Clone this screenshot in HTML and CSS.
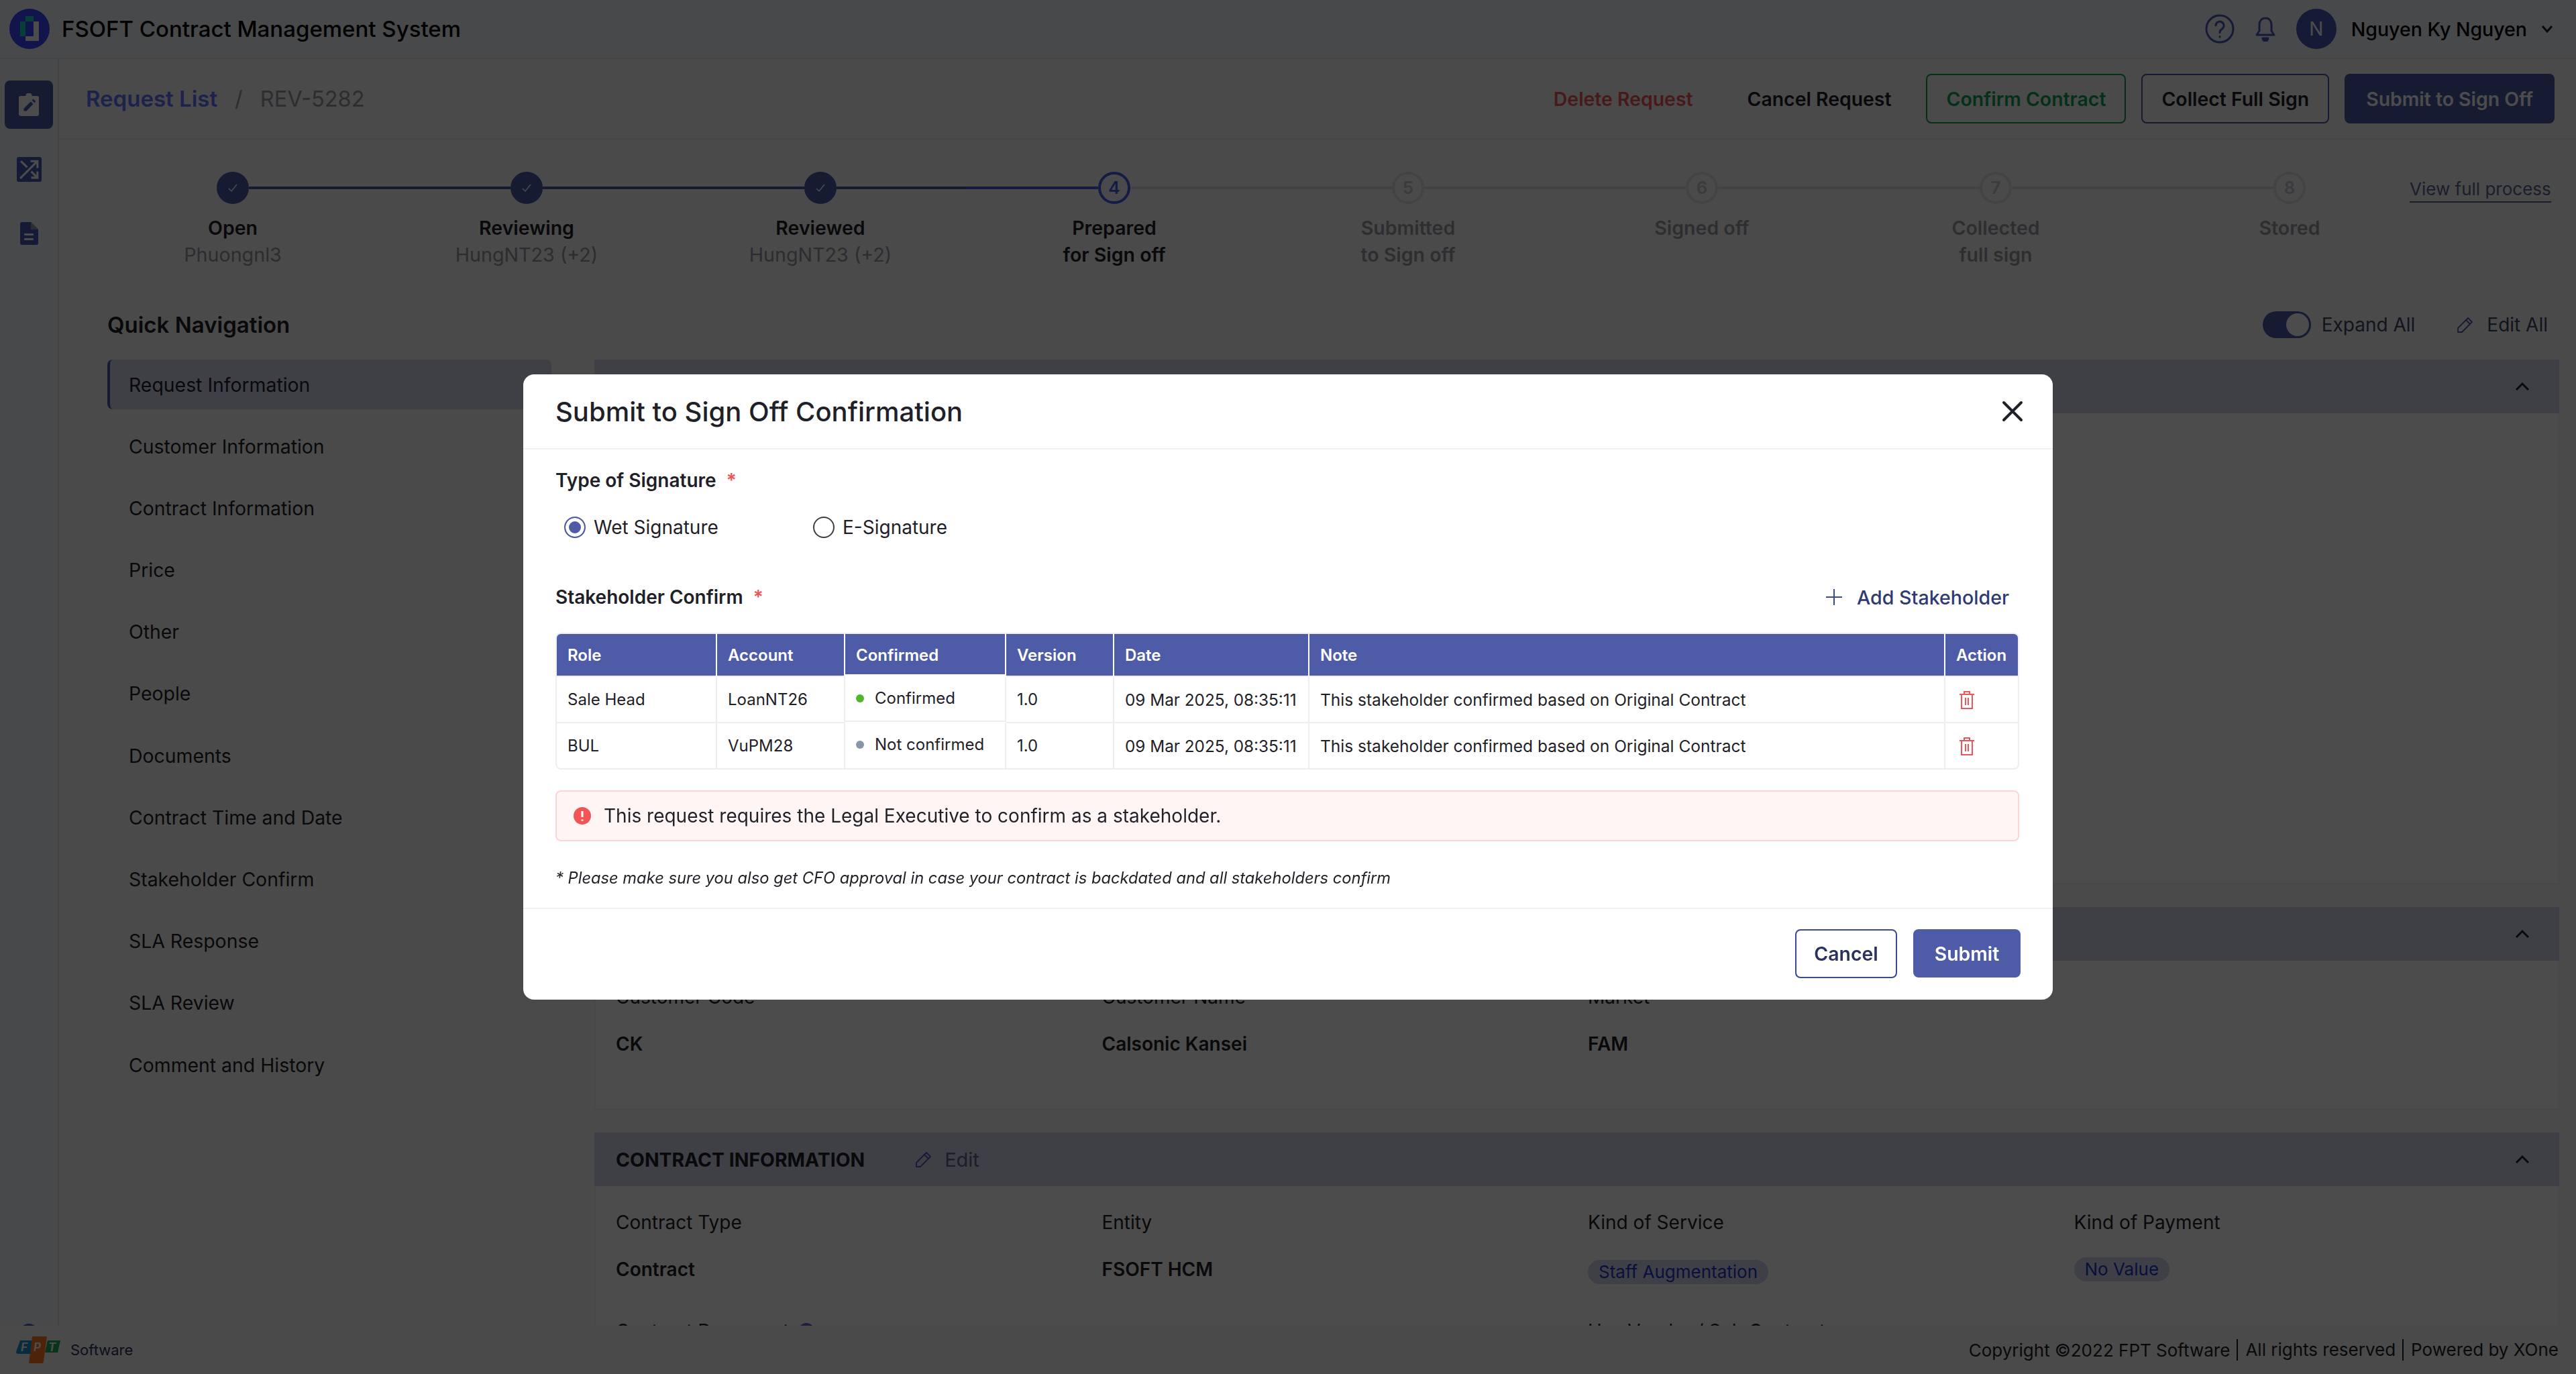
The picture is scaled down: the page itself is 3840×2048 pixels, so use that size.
FILE: index.html
```html
<!DOCTYPE html>
<html lang="en">
<head>
    <meta charset="UTF-8">
    <meta name="viewport" content="width=device-width, initial-scale=1.0">
    <title>FSOFT Contract Management System</title>
    <link rel="stylesheet" href="styles.css">
</head>
<body>
    <div class="app">
        <!-- Top bar -->
        <header class="topbar">
            <svg class="logo" viewBox="0 0 60 60">
                <circle cx="30" cy="30" r="30" fill="#3c46ff"/>
                <rect x="16" y="19" width="8" height="22" fill="#1fd0b8"/>
                <rect x="24" y="11" width="12" height="8" fill="#1fd0b8"/>
                <path d="M36 19h8v29H24v-7h12z" fill="#fff"/>
            </svg>
            <div class="app-title">FSOFT Contract Management System</div>
            <div class="topbar-right">
                <svg class="help-icon" viewBox="0 0 44 44" fill="none" stroke="#495ab4" stroke-width="3" stroke-linecap="round">
                    <circle cx="22" cy="22" r="20"/>
                    <path d="M16 17a6 6 0 1 1 9.5 5c-2.200 1.500-3.500 2.700-3.500 5.500"/>
                    <path d="M22 33.500v.5"/>
                </svg>
                <svg class="bell-icon" viewBox="0 0 30 38" fill="none" stroke="#495ab4" stroke-width="3" stroke-linejoin="round">
                    <path d="M15 3c-6 0-9 4.500-9 10v9l-4 6h26l-4-6v-9c0-5.500-3-10-9-10z"/>
                    <path d="M11 33a4 4 0 0 0 8 0z" fill="#495ab4"/>
                </svg>
                <div class="avatar">N</div>
                <div class="user-name">Nguyen Ky Nguyen</div>
                <svg class="user-chevron" viewBox="0 0 18 12" fill="none" stroke="#1f2128" stroke-width="3"><path d="M2 2l7 8 7-8"/></svg>
            </div>
        </header>

        <div class="middle">
            <!-- Side icons -->
            <aside class="sidebar">
                <div class="side-item active">
                    <svg viewBox="0 0 32 36" width="30" height="34">
                        <path d="M3 4h8a5 5 0 0 1 10 0h8a3 3 0 0 1 3 3v26a3 3 0 0 1-3 3H3a3 3 0 0 1-3-3V7a3 3 0 0 1 3-3z" fill="#fff"/>
                        <path d="M8 28v-4l11-11 4 4-11 11zM21 11l2-2 4 4-2 2z" fill="#495ab4"/>
                    </svg>
                </div>
                <div class="side-item">
                    <svg viewBox="0 0 36 36" width="37" height="37">
                        <rect width="36" height="36" rx="3" fill="#495ab4"/>
                        <path d="M5 31L29 7M20 6h10v10M6 6l9 9M21 21l9 9M30 21v9h-9" fill="none" stroke="#fff" stroke-width="3"/>
                    </svg>
                </div>
                <div class="side-item">
                    <svg viewBox="0 0 27 34" width="27" height="34">
                        <path d="M3 0h13l11 11v20a3 3 0 0 1-3 3H3a3 3 0 0 1-3-3V3a3 3 0 0 1 3-3z" fill="#495ab4"/>
                        <path d="M16 0v11h11z" fill="#9a9ca5"/>
                        <rect x="6" y="17" width="14" height="3" rx="1" fill="#fff"/>
                        <rect x="6" y="24" width="14" height="3" rx="1" fill="#fff"/>
                    </svg>
                </div>
                <div class="side-dot"></div>
            </aside>

            <main class="main">
                <div class="subheader">
                    <div class="breadcrumb">
                        <a class="crumb-link">Request List</a>
                        <span class="crumb-sep">/</span>
                        <span class="crumb-current">REV-5282</span>
                    </div>
                    <div class="actions">
                        <button class="link-btn delete">Delete Request</button>
                        <button class="link-btn">Cancel Request</button>
                        <button class="btn btn-green">Confirm Contract</button>
                        <button class="btn btn-outline">Collect Full Sign</button>
                        <button class="btn btn-primary">Submit to Sign Off</button>
                    </div>
                </div>

                <!-- Progress steps -->
                <div class="stepper">
                    <div class="step done">
                        <div class="step-head"><span class="seg blank"></span><span class="circle"><svg viewBox="0 0 16 16" width="16" height="16" fill="none" stroke="#fff" stroke-width="1.500"><path d="M2 9l4 4 8-10"/></svg></span><span class="seg fill"></span></div>
                        <div class="step-name">Open</div>
                        <div class="step-sub">Phuongnl3</div>
                    </div>
                    <div class="step done">
                        <div class="step-head"><span class="seg fill"></span><span class="circle"><svg viewBox="0 0 16 16" width="16" height="16" fill="none" stroke="#fff" stroke-width="1.500"><path d="M2 9l4 4 8-10"/></svg></span><span class="seg fill"></span></div>
                        <div class="step-name">Reviewing</div>
                        <div class="step-sub">HungNT23 (+2)</div>
                    </div>
                    <div class="step done">
                        <div class="step-head"><span class="seg fill"></span><span class="circle"><svg viewBox="0 0 16 16" width="16" height="16" fill="none" stroke="#fff" stroke-width="1.500"><path d="M2 9l4 4 8-10"/></svg></span><span class="seg fill"></span></div>
                        <div class="step-name">Reviewed</div>
                        <div class="step-sub">HungNT23 (+2)</div>
                    </div>
                    <div class="step current">
                        <div class="step-head"><span class="seg bright"></span><span class="circle">4</span><span class="seg"></span></div>
                        <div class="step-name">Prepared<br>for Sign off</div>
                    </div>
                    <div class="step">
                        <div class="step-head"><span class="seg"></span><span class="circle">5</span><span class="seg"></span></div>
                        <div class="step-name">Submitted<br>to Sign off</div>
                    </div>
                    <div class="step">
                        <div class="step-head"><span class="seg"></span><span class="circle">6</span><span class="seg"></span></div>
                        <div class="step-name">Signed off</div>
                    </div>
                    <div class="step">
                        <div class="step-head"><span class="seg"></span><span class="circle">7</span><span class="seg"></span></div>
                        <div class="step-name">Collected<br>full sign</div>
                    </div>
                    <div class="step">
                        <div class="step-head"><span class="seg"></span><span class="circle">8</span><span class="seg blank"></span></div>
                        <div class="step-name">Stored</div>
                    </div>
                    <a class="view-process">View full process</a>
                </div>

                <div class="content">
                    <!-- Quick navigation -->
                    <nav class="quick-nav">
                        <h3 class="nav-title">Quick Navigation</h3>
                        <div class="nav-list">
                            <div class="nav-item active">Request Information</div>
                            <div class="nav-item">Customer Information</div>
                            <div class="nav-item">Contract Information</div>
                            <div class="nav-item">Price</div>
                            <div class="nav-item">Other</div>
                            <div class="nav-item">People</div>
                            <div class="nav-item">Documents</div>
                            <div class="nav-item">Contract Time and Date</div>
                            <div class="nav-item">Stakeholder Confirm</div>
                            <div class="nav-item">SLA Response</div>
                            <div class="nav-item">SLA Review</div>
                            <div class="nav-item">Comment and History</div>
                        </div>
                    </nav>

                    <div class="details">
                        <div class="details-bar">
                            <span class="toggle"><span class="knob"></span></span>
                            <span class="bar-text">Expand All</span>
                            <svg class="pencil" viewBox="0 0 26 26" fill="none" stroke="#495ab4" stroke-width="1.800" stroke-linejoin="round"><path d="M2 24v-6L17 3l6 6L8 24zM14 6l6 6"/></svg>
                            <span class="bar-text">Edit All</span>
                        </div>

                        <section class="section request">
                            <div class="section-head">
                                <span class="section-title">REQUEST INFORMATION</span>
                                <svg class="chevron" viewBox="0 0 22 14" fill="none" stroke="#1f2128" stroke-width="3"><path d="M2 12l9-9 9 9"/></svg>
                            </div>
                        </section>

                        <section class="section customer">
                            <div class="section-head">
                                <span class="section-title">CUSTOMER INFORMATION</span>
                                <svg class="chevron" viewBox="0 0 22 14" fill="none" stroke="#1f2128" stroke-width="3"><path d="M2 12l9-9 9 9"/></svg>
                            </div>
                            <div class="fields">
                                <div class="field"><div class="label">Customer Code</div><div class="value">CK</div></div>
                                <div class="field"><div class="label">Customer Name</div><div class="value">Calsonic Kansei</div></div>
                                <div class="field"><div class="label">Market</div><div class="value">FAM</div></div>
                            </div>
                        </section>

                        <section class="section contract">
                            <div class="section-head">
                                <span class="section-title">CONTRACT INFORMATION</span>
                                <span class="section-edit">
                                    <svg class="pencil" viewBox="0 0 26 26" fill="none" stroke="#495ab4" stroke-width="1.800" stroke-linejoin="round"><path d="M2 24v-6L17 3l6 6L8 24zM14 6l6 6"/></svg>
                                    Edit
                                </span>
                                <svg class="chevron" viewBox="0 0 22 14" fill="none" stroke="#1f2128" stroke-width="3"><path d="M2 12l9-9 9 9"/></svg>
                            </div>
                            <div class="fields">
                                <div class="field"><div class="label">Contract Type</div><div class="value">Contract</div></div>
                                <div class="field"><div class="label">Entity</div><div class="value">FSOFT HCM</div></div>
                                <div class="field"><div class="label">Kind of Service</div><span class="pill low">Staff Augmentation</span></div>
                                <div class="field"><div class="label">Kind of Payment</div><span class="pill">No Value</span></div>
                                <div class="field"><div class="label">Contract Document <span class="info-dot"></span></div></div>
                                <div class="field"></div>
                                <div class="field"><div class="label">Has Vendor / Sub Contract</div></div>
                            </div>
                        </section>
                    </div>
                </div>
            </main>
        </div>

        <footer class="footer">
            <div class="fpt">
                <svg viewBox="0 0 66 40" width="66" height="40">
                    <path d="M6 6h20l-5 20H3a3 3 0 0 1-3-3z" fill="#1f8fd6"/>
                    <path d="M24 0h22l-5 37a3 3 0 0 1-3 3H19z" fill="#ff7a1f"/>
                    <path d="M47 6h19l-4 18H43z" fill="#1fae55"/>
                    <text x="7" y="22" class="fpt-letter">F</text>
                    <text x="26" y="22" class="fpt-letter">P</text>
                    <text x="48" y="22" class="fpt-letter">T</text>
                </svg>
                <span class="fpt-name">Software</span>
            </div>
            <div class="copyright">
                <span>Copyright ©2022 FPT Software</span>
                <span class="split">All rights reserved</span>
                <span class="split">Powered by XOne</span>
            </div>
        </footer>
    </div>

    <!-- Confirmation dialog -->
    <div class="overlay">
        <div class="modal">
            <div class="modal-head">
                <h2 class="modal-title">Submit to Sign Off Confirmation</h2>
                <svg class="close-icon" viewBox="0 0 32 32" fill="none" stroke="#1f2128" stroke-width="4" stroke-linecap="round"><path d="M3 3l26 26M29 3L3 29"/></svg>
            </div>
            <div class="modal-body">
                <div class="form-label">Type of Signature <span class="req">*</span></div>
                <div class="radios">
                    <label class="radio"><span class="radio-mark on"></span>Wet Signature</label>
                    <label class="radio"><span class="radio-mark"></span>E-Signature</label>
                </div>
                <div class="stake-head">
                    <div class="form-label">Stakeholder Confirm <span class="req">*</span></div>
                    <div class="add-stake">
                        <svg viewBox="0 0 24 24" width="24" height="24" fill="none" stroke="#3d4a8c" stroke-width="2"><path d="M12 0v24M0 12h24"/></svg>
                        Add Stakeholder
                    </div>
                </div>
                <div class="table-wrap">
                    <table class="stake-table">
                        <colgroup>
                            <col class="c-role"><col class="c-account"><col class="c-confirm"><col class="c-version"><col class="c-date"><col><col class="c-action">
                        </colgroup>
                        <thead>
                            <tr>
                                <th>Role</th>
                                <th>Account</th>
                                <th class="shifted">Confirmed</th>
                                <th>Version</th>
                                <th>Date</th>
                                <th>Note</th>
                                <th>Action</th>
                            </tr>
                        </thead>
                        <tbody>
                            <tr>
                                <td>Sale Head</td>
                                <td>LoanNT26</td>
                                <td class="shifted"><span class="dot green"></span>Confirmed</td>
                                <td>1.0</td>
                                <td class="date-cell">09 Mar 2025, 08:35:11</td>
                                <td class="note-cell">This stakeholder confirmed based on Original Contract</td>
                                <td><svg class="trash" viewBox="0 0 24 28" fill="none" stroke="#f25555" stroke-width="2"><path d="M1 6h22M4 6v21h16V6M8 6V2h8v4M10 11v11M14 11v11"/></svg></td>
                            </tr>
                            <tr>
                                <td>BUL</td>
                                <td>VuPM28</td>
                                <td class="shifted"><span class="dot grey"></span>Not confirmed</td>
                                <td>1.0</td>
                                <td class="date-cell">09 Mar 2025, 08:35:11</td>
                                <td class="note-cell">This stakeholder confirmed based on Original Contract</td>
                                <td><svg class="trash" viewBox="0 0 24 28" fill="none" stroke="#f25555" stroke-width="2"><path d="M1 6h22M4 6v21h16V6M8 6V2h8v4M10 11v11M14 11v11"/></svg></td>
                            </tr>
                        </tbody>
                    </table>
                </div>
                <div class="alert">
                    <svg viewBox="0 0 26 26" width="26" height="26"><circle cx="13" cy="13" r="13" fill="#f25555"/><path d="M13 6v9M13 18.500v2" stroke="#fff" stroke-width="3"/></svg>
                    This request requires the Legal Executive to confirm as a stakeholder.
                </div>
                <p class="note">* Please make sure you also get CFO approval in case your contract is backdated and all stakeholders confirm</p>
            </div>
            <div class="modal-foot">
                <button class="btn modal-cancel">Cancel</button>
                <button class="btn modal-submit">Submit</button>
            </div>
        </div>
    </div>
</body>
</html>
```

FILE: styles.css
```css
* {
    box-sizing: border-box;
}
body {
    margin: 0;
    font-family: Inter, "Noto Sans", sans-serif;
    font-size: 28px;
    color: #1f2128;
    background-color: #f7f8fa;
}
h2, h3, p {
    margin: 0;
}
button {
    font-family: inherit;
    font-size: 28.400px;
    font-weight: 600;
    background: none;
    border: none;
    padding: 0;
    color: inherit;
}
.app {
    height: 2048px;
    display: flex;
    flex-direction: column;
    overflow: hidden;
}

/* top bar */
.topbar {
    height: 88px;
    flex: none;
    display: flex;
    align-items: center;
    padding: 0 34px 0 14px;
    background-color: #f0f3fa;
    border-bottom: 2px solid #e1e3ea;
}
.logo {
    width: 60px;
    height: 60px;
}
.app-title {
    margin-left: 18px;
    font-size: 33px;
    font-weight: 500;
    color: #000;
}
.topbar-right {
    margin-left: auto;
    display: flex;
    align-items: center;
}
.help-icon {
    width: 44px;
    height: 44px;
}
.bell-icon {
    width: 30px;
    height: 38px;
    margin-left: 31px;
}
.avatar {
    width: 60px;
    height: 60px;
    margin-left: 31px;
    border-radius: 50%;
    background-color: #495ab4;
    color: #fff;
    display: flex;
    align-items: center;
    justify-content: center;
    font-size: 28px;
}
.user-name {
    margin-left: 22px;
    font-size: 28.500px;
    font-weight: 500;
    color: #000;
}
.user-chevron {
    width: 18px;
    height: 12px;
    margin-left: 21px;
}

/* left icons */
.middle {
    flex: 1;
    min-height: 0;
    display: flex;
}
.sidebar {
    width: 88px;
    flex: none;
    display: flex;
    flex-direction: column;
    align-items: center;
    padding-top: 32px;
    background-color: #f0f3fa;
    border-right: 2px solid #dfe1e8;
    overflow: hidden;
}
.side-item {
    width: 72px;
    height: 72px;
    margin-bottom: 24px;
    border-radius: 8px;
    display: flex;
    align-items: center;
    justify-content: center;
}
.side-item.active {
    background-color: #4e5ba6;
}
.side-dot {
    width: 28px;
    height: 28px;
    margin-top: auto;
    margin-bottom: -25px;
    border-radius: 50%;
    background-color: #495ab4;
}

.main {
    flex: 1;
    min-width: 0;
    overflow: hidden;
}
.subheader {
    height: 120px;
    display: flex;
    align-items: center;
    padding: 0 32px 0 40px;
    border-bottom: 2px solid #e1e3ea;
}
.breadcrumb {
    display: flex;
    align-items: center;
    font-size: 32.500px;
}
.crumb-link {
    font-size: 33px;
    font-weight: 600;
    color: #5f74ff;
}
.crumb-sep {
    margin: 0 26px;
    color: #94969f;
}
.crumb-current {
    color: #94969f;
}
.actions {
    margin-left: auto;
    display: flex;
    align-items: center;
}
.link-btn {
    margin-right: 52px;
}
.link-btn.delete {
    margin-right: 81px;
    color: #f25555;
}
.btn {
    height: 74px;
    padding: 0 28px;
    border-radius: 8px;
    border: 2px solid transparent;
}
.btn-green {
    color: #12a150;
    border-color: #12a150;
    margin-right: 23px;
}
.btn-outline {
    border-color: #4e5ba6;
    margin-right: 23px;
}
.btn-primary {
    padding: 0 30px;
    background-color: #4e5ba6;
    color: #fff;
}

/* stepper */
.stepper {
    display: flex;
    align-items: flex-start;
    padding: 48px 0 0 40px;
    height: 192px;
}
.step {
    width: 438px;
    flex: none;
    text-align: center;
    line-height: 40px;
}
.step-head {
    display: flex;
    align-items: center;
    margin-bottom: 16px;
}
.seg {
    flex: 1;
    height: 4px;
    background-color: #dfe0e6;
}
.seg.blank {
    background: none;
}
.seg.fill {
    background-color: #4e5ba6;
}
.seg.bright {
    background-color: #4460e8;
}
.circle {
    width: 48px;
    height: 48px;
    flex: none;
    border-radius: 50%;
    border: 4px solid #dfe0e6;
    display: flex;
    align-items: center;
    justify-content: center;
    font-size: 26px;
    font-weight: 600;
    color: #c4c5cc;
}
.step.done .circle {
    background-color: #4e5ba6;
    border-color: #4e5ba6;
}
.step.current .circle {
    border-color: #4460e8;
    color: #4460e8;
}
.step-name {
    font-size: 28.500px;
    font-weight: 600;
    color: #9a9ca5;
}
.step.done .step-name,
.step.current .step-name {
    color: #1f2128;
}
.step-sub {
    font-size: 28.700px;
    color: #94969f;
}
.view-process {
    margin: 8px 0 0 -40px;
    font-size: 26px;
    color: #5a648f;
    border-bottom: 2px solid #5a648f;
    line-height: 36px;
    white-space: nowrap;
}

/* page content */
.content {
    display: flex;
    gap: 64px;
    padding: 60px 25px 0 72px;
}
.quick-nav {
    width: 662px;
    flex: none;
}
.nav-title {
    font-size: 33px;
    font-weight: 600;
    line-height: 48px;
    margin-bottom: 28px;
}
.nav-list {
    display: flex;
    flex-direction: column;
    gap: 18.200px;
    font-size: 28.400px;
}
.nav-item {
    height: 74px;
    display: flex;
    align-items: center;
    padding-left: 32px;
    border-radius: 8px;
}
.nav-item.active {
    background-color: #d2d5e6;
    border-left: 4px solid #4e5ba6;
    padding-left: 28px;
}
.details {
    flex: 1;
    min-width: 0;
}
.details-bar {
    height: 48px;
    margin-bottom: 28px;
    padding-right: 17px;
    display: flex;
    align-items: center;
    justify-content: flex-end;
}
.toggle {
    width: 72px;
    height: 40px;
    border-radius: 20px;
    background-color: #4e5ba6;
    display: flex;
    align-items: center;
    justify-content: flex-end;
    padding-right: 3px;
    margin-right: 16px;
}
.knob {
    width: 34px;
    height: 34px;
    border-radius: 50%;
    background-color: #fff;
}
.bar-text {
    color: #3d4466;
}
.pencil {
    width: 26px;
    height: 26px;
    margin: 0 19px 0 62px;
}
.section {
    margin-bottom: 34px;
    background-color: #fff;
    border: 2px solid #f0f0f4;
    border-top: none;
}
.section.request {
    height: 782px;
}
.section.customer {
    height: 302px;
}
.section-head {
    height: 80px;
    margin: 0 -2px;
    padding: 0 32px;
    display: flex;
    align-items: center;
    background-color: #d2d5e6;
}
.section-title {
    font-size: 28.400px;
    font-weight: 700;
    color: #1f2128;
}
.section-edit {
    display: flex;
    align-items: center;
    font-size: 29px;
    color: #5a648f;
}
.section-edit .pencil {
    margin: 0 18px 0 75px;
}
.chevron {
    width: 22px;
    height: 14px;
    margin-left: auto;
    margin-right: 12px;
}
.fields {
    display: grid;
    grid-template-columns: repeat(4, 724.500px);
    padding: 34px 0 0 30px;
    row-gap: 50px;
}
.label {
    line-height: 40px;
    margin-bottom: 30px;
    display: flex;
    align-items: center;
    gap: 14px;
    white-space: nowrap;
}
.value {
    line-height: 40px;
    font-weight: 600;
}
.pill {
    display: inline-block;
    height: 36px;
    line-height: 36px;
    margin-top: 2px;
    padding: 0 16px;
    border-radius: 18px;
    background-color: #d2d8ee;
    color: #2436c8;
    font-size: 26px;
}
.pill.low {
    margin-top: 6px;
}
.info-dot {
    width: 24px;
    height: 24px;
    border-radius: 50%;
    background-color: #5a64c8;
}

/* footer */
.footer {
    height: 72px;
    flex: none;
    display: flex;
    align-items: center;
    justify-content: space-between;
    padding: 0 26px 0 24px;
    background-color: #f8f8f8;
    position: relative;
}
.fpt {
    display: flex;
    align-items: center;
}
.fpt-letter {
    font-size: 17px;
    font-weight: 700;
    font-style: italic;
    fill: #fff;
}
.fpt-name {
    margin-left: 15px;
    font-size: 22px;
    color: #2a3360;
}
.copyright {
    display: flex;
    align-items: center;
    font-size: 26px;
}
.split {
    margin-left: 10px;
    padding-left: 11px;
    border-left: 2px solid #1f2128;
    line-height: 32px;
}

/* dialog */
.overlay {
    position: fixed;
    inset: 0;
    display: flex;
    align-items: center;
    justify-content: center;
    background-color: rgba(0, 0, 0, 0.7);
}
.modal {
    width: 2280px;
    height: 932px;
    border-radius: 16px;
    background-color: #fff;
    display: flex;
    flex-direction: column;
}
.modal-head {
    height: 112px;
    flex: none;
    display: flex;
    align-items: center;
    justify-content: space-between;
    padding: 0 44px 0 48px;
    border-bottom: 2px solid #eff0f3;
}
.modal-title {
    font-size: 40px;
    font-weight: 500;
}
.close-icon {
    width: 32px;
    height: 32px;
}
.modal-body {
    flex: 1;
    padding: 26px 50px 0 48px;
    border-bottom: 2px solid #eff0f3;
}
.form-label {
    font-weight: 600;
    line-height: 40px;
}
.req {
    margin-left: 8px;
    color: #f25555;
}
.radios {
    display: flex;
    margin: 30px 0 0 13px;
    height: 40px;
}
.radio {
    display: flex;
    align-items: center;
    width: 371px;
}
.radio-mark {
    width: 32px;
    height: 32px;
    margin-right: 12px;
    border-radius: 50%;
    border: 2px solid #3d3f46;
    background-color: #fff;
}
.radio-mark.on {
    border-color: #4e5ba6;
    background-color: #4e5ba6;
    box-shadow: inset 0 0 0 5px #fff;
}
.stake-head {
    margin-top: 64px;
    display: flex;
    align-items: center;
    justify-content: space-between;
    padding-right: 15px;
}
.add-stake {
    display: flex;
    align-items: center;
    gap: 22px;
    font-size: 28.600px;
    font-weight: 500;
    color: #2f3a74;
}
.table-wrap {
    margin-top: 33px;
    border: 2px solid #eceef3;
    border-radius: 8px;
    overflow: hidden;
}
.stake-table {
    width: 100%;
    table-layout: fixed;
    border-collapse: separate;
    border-spacing: 0;
    font-size: 24px;
}
.c-role { width: 239px; }
.c-account { width: 191px; }
.c-confirm { width: 240px; }
.c-version { width: 161px; }
.c-date { width: 291px; }
.c-action { width: 108px; }
.stake-table th {
    height: 64px;
    padding: 0 0 0 16px;
    text-align: left;
    font-weight: 600;
    color: #fff;
    background-color: #4e5ba6;
    border-right: 2px solid #fff;
    border-bottom: 2px solid #eceef3;
}
.stake-table td {
    height: 69px;
    padding: 0 0 0 16px;
    border-right: 2px solid #eceef3;
    border-bottom: 2px solid #eceef3;
}
.stake-table tr:last-child td {
    height: 67px;
    border-bottom: none;
}
.stake-table th:last-child,
.stake-table td:last-child {
    border-right: none;
}
.stake-table td.date-cell {
    font-size: 24.300px;
}
.stake-table td.note-cell {
    font-size: 24.500px;
}
.stake-table td.shifted {
    padding-bottom: 4px;
}
.stake-table tr:first-child td.shifted {
    border-bottom-color: #fff;
    box-shadow: inset 0 -2px 0 #eceef3;
}
.stake-table th.shifted {
    border-bottom-color: #fff;
    box-shadow: inset 0 -2px 0 #fff;
}
.dot {
    display: inline-block;
    width: 12px;
    height: 12px;
    margin-right: 16px;
    border-radius: 50%;
    vertical-align: 2px;
}
.dot.green {
    background-color: #52b52a;
}
.dot.grey {
    background-color: #8a96a8;
}
.trash {
    display: block;
    width: 24px;
    height: 28px;
    margin-left: 4px;
}
.alert {
    margin-top: 31px;
    height: 76px;
    display: flex;
    align-items: center;
    gap: 19px;
    padding-left: 25px;
    border: 2px solid #ffd4d4;
    border-radius: 8px;
    background-color: #fff5f4;
}
.note {
    margin-top: 38px;
    font-size: 23.700px;
    font-style: italic;
    line-height: 34px;
}
.modal-foot {
    height: 135px;
    flex: none;
    display: flex;
    justify-content: flex-end;
    gap: 24px;
    padding: 30px 48px 0 0;
}
.modal-cancel {
    width: 152px;
    height: 73px;
    padding: 0;
    color: #2a3360;
    border-color: #3d4a8c;
}
.modal-submit {
    width: 160px;
    height: 72px;
    padding: 0;
    color: #fff;
    background-color: #4e5ba6;
}
```
